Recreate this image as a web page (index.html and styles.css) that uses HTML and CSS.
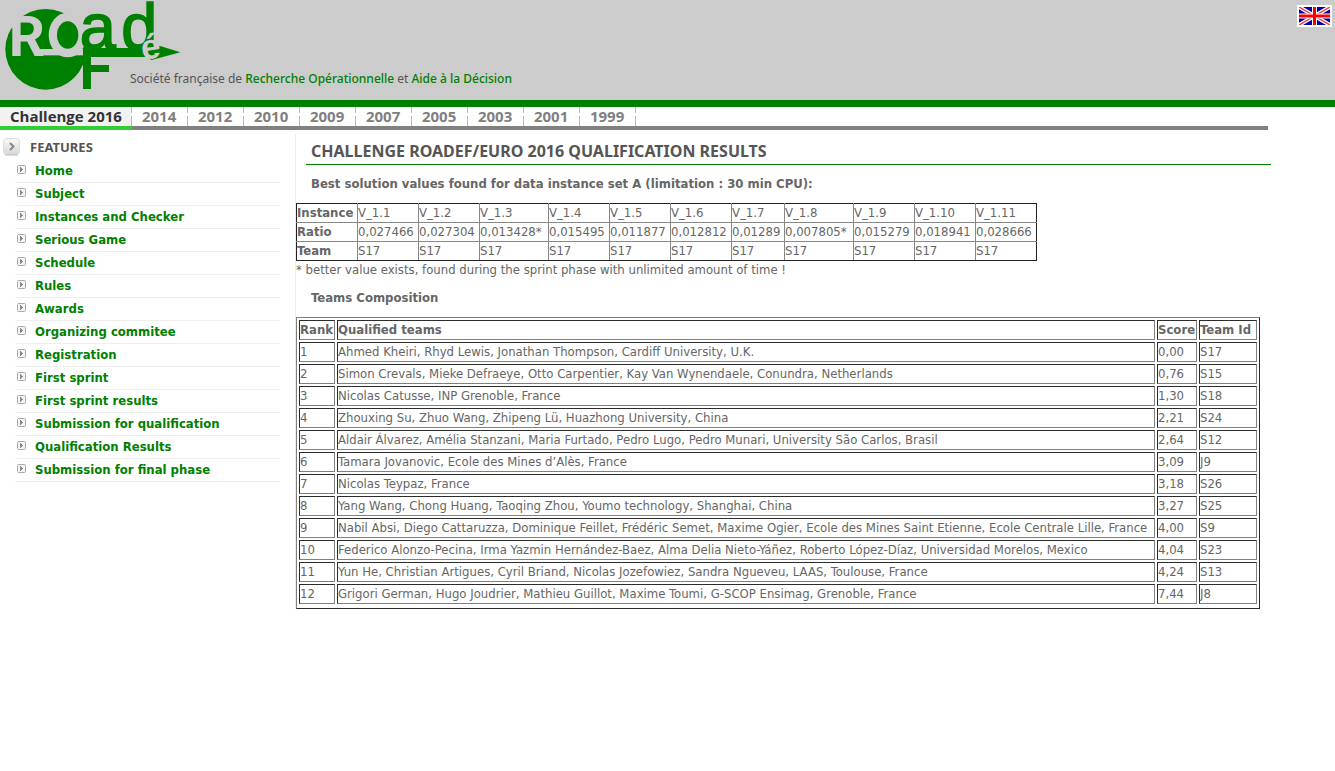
FILE: index.html
```html
<!DOCTYPE html>
<html lang="en">
<head>
<meta charset="utf-8">
<title>Challenge ROADEF/EURO 2016 Qualification Results</title>
<link rel="stylesheet" href="styles.css">
</head>
<body>
<svg class="defs" aria-hidden="true">
  <symbol id="bullet" viewBox="0 0 9 9">
    <rect x=".5" y=".5" width="8" height="8" rx="1" fill="#f4f4f4" stroke="#aaa"/>
    <path d="M3 2h1v5H3zM4 3h1v3H4zM5 4h1v1H5z" fill="#888"/>
  </symbol>
</svg>
<header class="banner">
  <svg class="logo" viewBox="0 0 570 300" role="img" aria-label="ROADEF">
    <circle cx="137" cy="148" r="121" fill="#008000"/>
    <path d="M0 0H70V47L36 85H0Z" fill="#ccc"/>
    <text class="glyph initial paper" x="26" y="167" font-size="169">R</text>
    <ellipse cx="203" cy="105" rx="57" ry="67" fill="#ccc"/>
    <rect x="104" y="147" width="156" height="19" fill="#ccc"/>
    <ellipse cx="203" cy="105" rx="32" ry="41" fill="#008000"/>
    <text class="glyph ink" x="239" y="146" font-size="194">a</text>
    <text class="glyph ink" x="364" y="146" font-size="194">d</text>
    <rect x="249" y="144" width="191" height="27" fill="#008000"/>
    <rect x="249" y="144" width="24" height="123" fill="#008000"/>
    <rect x="249" y="195" width="78" height="21" fill="#008000"/>
    <path d="M425 144H478V137L541 157L455 180L440 171H425Z" fill="#008000"/>
    <text class="glyph paper accent" x="424" y="176" font-size="104" transform="rotate(-8 450 150)">é</text>
  </svg>
  <p class="tagline">Société française de <strong>Recherche Opérationnelle</strong> et <strong>Aide à la Décision</strong></p>
  <a class="flag" href="#" aria-label="English">
    <svg viewBox="0 0 31 18" preserveAspectRatio="none">
      <rect width="31" height="18" fill="#0000a8"/>
      <path d="M0 0L31 18M31 0L0 18" stroke="#fff" stroke-width="4"/>
      <path d="M0 0L31 18M31 0L0 18" stroke="#f04040" stroke-width="1.5"/>
      <path d="M15.500 0V18M0 9H31" stroke="#fff" stroke-width="5"/>
      <path d="M15.500 0V18M0 9H31" stroke="#f00" stroke-width="3"/>
    </svg>
  </a>
</header>
<nav class="years">
  <a class="year current" href="#">Challenge 2016</a>
  <a class="year" href="#">2014</a>
  <a class="year" href="#">2012</a>
  <a class="year" href="#">2010</a>
  <a class="year" href="#">2009</a>
  <a class="year" href="#">2007</a>
  <a class="year" href="#">2005</a>
  <a class="year" href="#">2003</a>
  <a class="year" href="#">2001</a>
  <a class="year" href="#">1999</a>
</nav>
<div class="page">
  <aside class="sidebar">
    <h2 class="menu-title">
      <svg class="menu-icon" viewBox="0 0 17 18">
        <defs><linearGradient id="key" x2="0" y2="1"><stop stop-color="#fafafa"/><stop offset="1" stop-color="#d8d8d8"/></linearGradient></defs>
        <rect x=".5" y=".5" width="16" height="16" rx="3" fill="url(#key)" stroke="#ddd"/>
        <path d="M2 17H15" stroke="#bbb"/>
        <path d="M7 5L10.500 8.500L7 12" fill="none" stroke="#888" stroke-width="2"/>
      </svg>FEATURES</h2>
    <ul class="menu">
      <li><svg class="bullet"><use href="#bullet"/></svg><a href="#">Home</a></li>
      <li><svg class="bullet"><use href="#bullet"/></svg><a href="#">Subject</a></li>
      <li><svg class="bullet"><use href="#bullet"/></svg><a href="#">Instances and Checker</a></li>
      <li><svg class="bullet"><use href="#bullet"/></svg><a href="#">Serious Game</a></li>
      <li><svg class="bullet"><use href="#bullet"/></svg><a href="#">Schedule</a></li>
      <li><svg class="bullet"><use href="#bullet"/></svg><a href="#">Rules</a></li>
      <li><svg class="bullet"><use href="#bullet"/></svg><a href="#">Awards</a></li>
      <li><svg class="bullet"><use href="#bullet"/></svg><a href="#">Organizing commitee</a></li>
      <li><svg class="bullet"><use href="#bullet"/></svg><a href="#">Registration</a></li>
      <li><svg class="bullet"><use href="#bullet"/></svg><a href="#">First sprint</a></li>
      <li><svg class="bullet"><use href="#bullet"/></svg><a href="#">First sprint results</a></li>
      <li><svg class="bullet"><use href="#bullet"/></svg><a href="#">Submission for qualification</a></li>
      <li><svg class="bullet"><use href="#bullet"/></svg><a href="#">Qualification Results</a></li>
      <li><svg class="bullet"><use href="#bullet"/></svg><a href="#">Submission for final phase</a></li>
    </ul>
  </aside>
  <main class="content">
    <h1>CHALLENGE ROADEF/EURO 2016 QUALIFICATION RESULTS</h1>
    <h3>Best solution values found for data instance set A (limitation : 30 min CPU):</h3>
    <table class="ratios">
      <colgroup><col class="value" span="3"><col class="value-wide"><col class="value" span="3"><col class="value-narrow"><col class="value-wide"><col class="value" span="3"></colgroup>
      <tr><th>Instance</th><td>V_1.1</td><td>V_1.2</td><td>V_1.3</td><td>V_1.4</td><td>V_1.5</td><td>V_1.6</td><td>V_1.7</td><td>V_1.8</td><td>V_1.9</td><td>V_1.10</td><td>V_1.11</td></tr>
      <tr><th>Ratio</th><td>0,027466</td><td>0,027304</td><td>0,013428*</td><td>0,015495</td><td>0,011877</td><td>0,012812</td><td>0,01289</td><td>0,007805*</td><td>0,015279</td><td>0,018941</td><td>0,028666</td></tr>
      <tr><th>Team</th><td>S17</td><td>S17</td><td>S17</td><td>S17</td><td>S17</td><td>S17</td><td>S17</td><td>S17</td><td>S17</td><td>S17</td><td>S17</td></tr>
    </table>
    <p class="note">* better value exists, found during the sprint phase with unlimited amount of time !</p>
    <h3>Teams Composition</h3>
    <table class="teams">
      <colgroup><col class="rank"><col class="names"><col class="score"><col class="team-id"></colgroup>
      <tr><th>Rank</th><th>Qualified teams</th><th>Score</th><th>Team Id</th></tr>
      <tr><td>1</td><td>Ahmed Kheiri, Rhyd Lewis, Jonathan Thompson, Cardiff University, U.K.</td><td>0,00</td><td>S17</td></tr>
      <tr><td>2</td><td>Simon Crevals, Mieke Defraeye, Otto Carpentier, Kay Van Wynendaele, Conundra, Netherlands</td><td>0,76</td><td>S15</td></tr>
      <tr><td>3</td><td>Nicolas Catusse, INP Grenoble, France</td><td>1,30</td><td>S18</td></tr>
      <tr><td>4</td><td>Zhouxing Su, Zhuo Wang, Zhipeng Lü, Huazhong University, China</td><td>2,21</td><td>S24</td></tr>
      <tr><td>5</td><td>Aldair Álvarez, Amélia Stanzani, Maria Furtado, Pedro Lugo, Pedro Munari, University São Carlos, Brasil</td><td>2,64</td><td>S12</td></tr>
      <tr><td>6</td><td>Tamara Jovanovic, Ecole des Mines d’Alès, France</td><td>3,09</td><td>J9</td></tr>
      <tr><td>7</td><td>Nicolas Teypaz, France</td><td>3,18</td><td>S26</td></tr>
      <tr><td>8</td><td>Yang Wang, Chong Huang, Taoqing Zhou, Youmo technology, Shanghai, China</td><td>3,27</td><td>S25</td></tr>
      <tr><td>9</td><td>Nabil Absi, Diego Cattaruzza, Dominique Feillet, Frédéric Semet, Maxime Ogier, Ecole des Mines Saint Etienne, Ecole Centrale Lille, France</td><td>4,00</td><td>S9</td></tr>
      <tr><td>10</td><td>Federico Alonzo-Pecina, Irma Yazmin Hernández-Baez, Alma Delia Nieto-Yáñez, Roberto López-Díaz, Universidad Morelos, Mexico</td><td>4,04</td><td>S23</td></tr>
      <tr><td>11</td><td>Yun He, Christian Artigues, Cyril Briand, Nicolas Jozefowiez, Sandra Ngueveu, LAAS, Toulouse, France</td><td>4,24</td><td>S13</td></tr>
      <tr><td>12</td><td>Grigori German, Hugo Joudrier, Mathieu Guillot, Maxime Toumi, G-SCOP Ensimag, Grenoble, France</td><td>7,44</td><td>J8</td></tr>
    </table>
  </main>
</div>
</body>
</html>
```
FILE: styles.css
```css
* { box-sizing: border-box; }
body {
  margin: 0;
  background: #fff;
  color: #666;
  font: 13px/18px "DejaVu Sans Condensed", "DejaVu Sans", sans-serif;
}
a { text-decoration: none; }
.defs { display: none; }

.banner {
  display: flex;
  align-items: flex-start;
  height: 107px;
  background: #ccc;
  border-bottom: 7px solid #008000;
}
.logo { width: 190px; height: 100px; flex: none; overflow: visible; }
.glyph { font-family: "Liberation Sans", sans-serif; }
.initial { font-family: Roboto, sans-serif; font-weight: bold; }
.accent { font-weight: bold; }
.ink { fill: #008000; stroke: #008000; stroke-width: 5px; }
.paper { fill: #ccc; }
.tagline {
  margin: 70px auto 0 -60px;
  color: #555;
  font: 12px/18px "Noto Sans", sans-serif;
}
.tagline strong { color: #008000; font-weight: 500; }
.flag {
  margin: 5px 3px 0 0;
  border: 2px solid #fff;
}
.flag svg { display: block; width: 31px; height: 18px; }

.years {
  display: flex;
  width: 95%;
  border-bottom: 4px solid #808080;
}
.year {
  min-width: 56px;
  height: 19px;
  padding: 0 10px;
  color: #808080;
  background: linear-gradient(#bbb 6px, transparent 6px 9px, #bbb 9px) right / 1px 100% no-repeat;
  font: bold 15px/19px "Open Sans", sans-serif;
}
.current {
  height: 23px;
  margin-bottom: -4px;
  border-bottom: 4px solid #32cd32;
  background-color: #f2f2f2;
  color: #333;
}

.page { display: flex; align-items: flex-start; padding-top: 4px; }
.sidebar { width: 295px; flex: none; padding: 4px 15px 0 0; }
.menu-title {
  display: flex;
  align-items: center;
  gap: 10px;
  margin: 0;
  padding-left: 3px;
  color: #555;
  font: bold 13px/18px "Noto Sans", sans-serif;
}
.menu-icon { width: 17px; height: 18px; }
.menu { margin: 4px 0 0 15px; padding: 0; list-style: none; }
.menu li {
  display: flex;
  gap: 9px;
  padding: 2px 0 2px 2px;
  border-bottom: 1px solid #eee;
}
.bullet { width: 9px; height: 9px; margin-top: 3px; }
.menu a { color: #008000; font-weight: bold; }

.content {
  flex: 1;
  margin-right: 64px;
  border-left: 1px solid #eee;
}
h1 {
  margin: 0 0 0 10px;
  padding: 5px 5px 1px;
  border-bottom: 1px solid #008000;
  color: #555;
  font: bold 16px/24px "Noto Sans", sans-serif;
}
h3 { margin: 10px 15px; font-size: 13px; line-height: 18px; }
.note { margin: 0; }
th { text-align: left; }
th, td { padding: 0; white-space: nowrap; }

.ratios { border-collapse: collapse; border: 1px solid #222; }
.ratios th, .ratios td { border: 1px solid #888; }
.ratios tr:first-child > * { border-top-color: #222; }
.ratios tr:last-child > * { border-bottom-color: #222; }
.ratios tr > :first-child { border-left-color: #222; }
.ratios tr > :last-child { border-right-color: #222; }
.value { width: 61px; }
.value-wide { width: 69px; }
.value-narrow { width: 53px; }

.teams {
  padding-bottom: 2px;
  border: 1px solid;
  border-color: #808080 #2c2c2c #2c2c2c #808080;
  border-spacing: 2px;
}
.teams th, .teams td {
  border: 1px solid;
  border-color: #2c2c2c #808080 #808080 #2c2c2c;
}
.rank { width: 36px; }
.names { width: 818px; }
.score { width: 40px; }
.team-id { width: 58px; }
```
